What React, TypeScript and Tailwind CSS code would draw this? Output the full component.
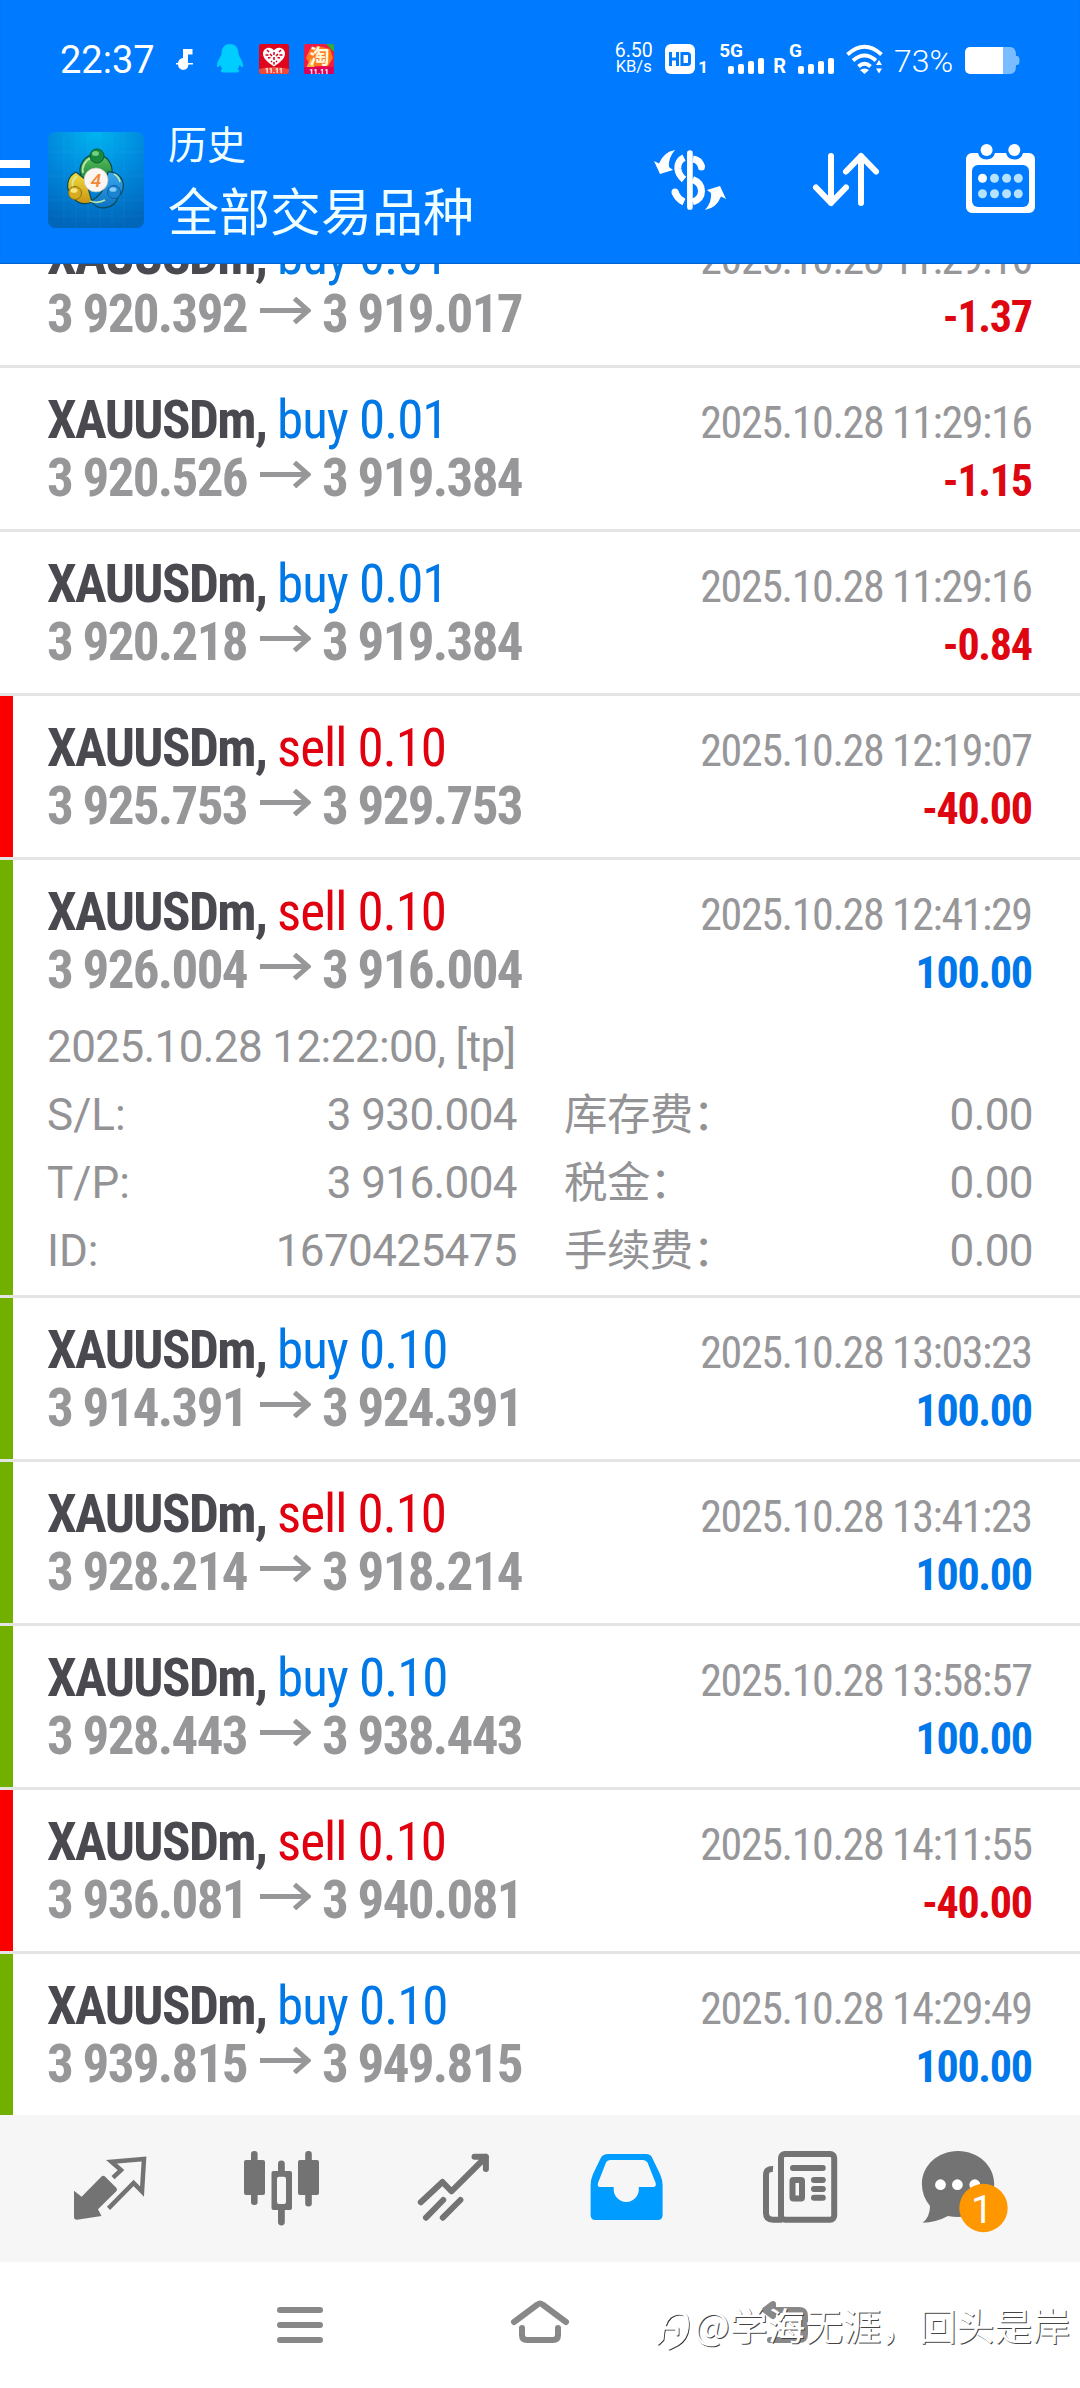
import type { ReactNode } from "react";

type Detail = { label: string; value: string; label2: string; value2: string };
type Trade = {
  side: "buy" | "sell";
  lots: string;
  from: string;
  to: string;
  time: string;
  profit: string;
  edge?: "red" | "green";
  opened?: string;
  details?: Detail[];
};

const trades: Trade[] = [
  { side: "buy", lots: "0.01", from: "3 920.392", to: "3 919.017", time: "2025.10.28 11:29:16", profit: "-1.37" },
  { side: "buy", lots: "0.01", from: "3 920.526", to: "3 919.384", time: "2025.10.28 11:29:16", profit: "-1.15" },
  { side: "buy", lots: "0.01", from: "3 920.218", to: "3 919.384", time: "2025.10.28 11:29:16", profit: "-0.84" },
  { side: "sell", lots: "0.10", from: "3 925.753", to: "3 929.753", time: "2025.10.28 12:19:07", profit: "-40.00", edge: "red" },
  {
    side: "sell", lots: "0.10", from: "3 926.004", to: "3 916.004", time: "2025.10.28 12:41:29", profit: "100.00", edge: "green",
    opened: "2025.10.28 12:22:00, [tp]",
    details: [
      { label: "S/L:", value: "3 930.004", label2: "库存费：", value2: "0.00" },
      { label: "T/P:", value: "3 916.004", label2: "税金：", value2: "0.00" },
      { label: "ID:", value: "1670425475", label2: "手续费：", value2: "0.00" },
    ],
  },
  { side: "buy", lots: "0.10", from: "3 914.391", to: "3 924.391", time: "2025.10.28 13:03:23", profit: "100.00", edge: "green" },
  { side: "sell", lots: "0.10", from: "3 928.214", to: "3 918.214", time: "2025.10.28 13:41:23", profit: "100.00", edge: "green" },
  { side: "buy", lots: "0.10", from: "3 928.443", to: "3 938.443", time: "2025.10.28 13:58:57", profit: "100.00", edge: "green" },
  { side: "sell", lots: "0.10", from: "3 936.081", to: "3 940.081", time: "2025.10.28 14:11:55", profit: "-40.00", edge: "red" },
  { side: "buy", lots: "0.10", from: "3 939.815", to: "3 949.815", time: "2025.10.28 14:29:49", profit: "100.00", edge: "green" },
];

function SignalBars() {
  return (
    <div className="flex items-end gap-[4px]">
      <i className="h-[8px] w-[6px] rounded-[2px] bg-white" />
      <i className="h-[10px] w-[6px] rounded-[2px] bg-white" />
      <i className="h-[13px] w-[6px] rounded-[2px] bg-white" />
      <i className="h-[16px] w-[6px] rounded-[2px] bg-white" />
    </div>
  );
}

function StatusBar() {
  return (
    <div className="flex h-[118px] items-start pl-[60px] pr-[60px] pt-[44px] text-white">
      <span className="-mt-[6px] w-[99px] text-[38px] leading-[44px]">22:37</span>
      <svg className="ml-[17px] mt-[5px]" width="18" height="21" viewBox="0 0 18 21" fill="#fff">
        <path d="M7 0h9.500v5.500H12v8.500h5v1.500h-4.500A6 6 0 0 1 7 21A6 6 0 0 1 2 15.500H0V14h2a6 6 0 0 1 5-5z" />
      </svg>
      <svg className="ml-[23px]" width="26" height="29" viewBox="0 0 26 29" fill="#00cdff">
        <path d="M13 0c6 0 8.500 4.500 8.500 9.500c0 3 4.500 7 4.500 12c0 3-1.500 1.500-3.500-.5c-.3 1.500-.8 2.500-1.800 3.800c3 2.700 1 3.700-2 3.700H7.300c-3 0-5-1-2-3.700c-1-1.300-1.500-2.300-1.800-3.800C1.500 23 0 24.500 0 21.500c0-5 4.500-9 4.500-12C4.500 4.500 7 0 13 0z" />
      </svg>
      <svg className="ml-[16px]" width="30" height="30" viewBox="0 0 30 30">
        <rect width="30" height="30" rx="2" fill="#e0041c" />
        <path d="M0 25Q15 21 30 25v3a2 2 0 0 1-2 2H2a2 2 0 0 1-2-2z" fill="#f0483a" />
        <path d="M15 22.500C8 18 4 14 4 9.500C4 3.500 12 1.500 15 6.500c3-5 11-3 11 3C26 14 22 18 15 22.500z" fill="#fff" />
        <path d="M15 8v3M15 13v3M15 18v2.500M8 6l2 2M22 6l-2 2M6.500 11h3M20.500 11h3M11 10l2 2M19 10l-2 2M9 14l2.500-.5M21 14l-2.500-.5M12 17l1 1M18 17l-1 1" stroke="#d00018" strokeWidth="1.500" />
        <text x="15" y="29" fontSize="7" fontWeight="700" textAnchor="middle" fill="#fff">11.11</text>
      </svg>
      <svg className="ml-[15px]" width="30" height="30" viewBox="0 0 30 30">
        <rect width="30" height="30" rx="2" fill="#ee1c44" />
        <path d="M2 14l4-9l8-3l12 3l3 9l-5 8H7z" fill="#ff7a1c" />
        <path d="M2 24l5-10l4 10z" fill="#ffb43a" />
        <path d="M22 0h6a2 2 0 0 1 2 2v6z" fill="#2fae3a" />
        <path d="M0 23h30v5a2 2 0 0 1-2 2H2a2 2 0 0 1-2-2z" fill="#dc0058" />
        <text x="15.500" y="19.500" fontSize="20" fontWeight="700" textAnchor="middle" fill="#fffbe0" className="font-['Noto_Sans_CJK_SC']">淘</text>
        <text x="15" y="29.500" fontSize="7.500" fontWeight="700" textAnchor="middle" fill="#fff">11.11</text>
      </svg>

      <div className="ml-auto flex h-[30px] items-end">
        <div className="flex w-[37px] flex-col items-center">
          <span className="text-[19.500px] leading-[15px]">6.50</span>
          <span className="mt-[1px] text-[16.500px] leading-[15px]">KB/s</span>
        </div>
        <svg className="ml-[13px]" width="30" height="30" viewBox="0 0 30 30">
          <rect width="30" height="30" rx="6" fill="#fff" />
          <path d="M5.500 8v14M12.500 8v14M5.500 15h7M17 9.500h5.500q2 0 2 2v7q0 2-2 2H17z" fill="none" stroke="#007aff" strokeWidth="3" />
        </svg>
        <span className="ml-[3px] w-[9px] text-[17px] font-bold leading-[13px]">1</span>
        <div className="ml-[12px] flex h-[30px] flex-col justify-between">
          <span className="h-[14px] text-[19px] font-bold leading-[14px]">5G</span>
          <div className="ml-[9px]"><SignalBars /></div>
        </div>
        <span className="ml-[9px] text-[20px] font-bold leading-[15px]">R</span>
        <div className="ml-[3px] flex h-[30px] flex-col justify-between">
          <span className="h-[14px] text-[19px] font-bold leading-[14px]">G</span>
          <div className="ml-[9px]"><SignalBars /></div>
        </div>
        <svg className="ml-[12px]" width="38" height="30" viewBox="0 0 38 30" fill="none" stroke="#fff" strokeWidth="4">
          <path d="M1.500 10.500Q18.500-5 35.500 10.500M7 16.500Q18.500 6.500 30 16.500M12.500 22.500Q18.500 17 24.500 22.500" />
          <path d="M14 26q4.500-3 9 0l-4.500 4zM33 16l3 5h-6zM33 29.500l3-5h-6z" fill="#fff" stroke="none" />
        </svg>
        <span className="ml-[10px] w-[63px] text-[32px] font-[350] leading-[26px]">73%</span>
        <svg className="ml-[8px]" width="55" height="27" viewBox="0 0 55 27">
          <path d="M38 0h7q6 0 6 8v1h1q2.500 0 2.500 4.500T52 18h-1v1q0 8-6 8h-7z" fill="#79bcff" />
          <rect width="38" height="27" rx="5" fill="#fff" />
          <rect x="20" width="18" height="27" fill="#fff" />
        </svg>
      </div>
    </div>
  );
}

function AppLogo() {
  return (
    <svg width="96" height="96" viewBox="0 0 96 96">
      <defs>
        <radialGradient id="logoBg" cx="0.5" cy="0" r="1">
          <stop offset="0" stopColor="#00b4ee" />
          <stop offset="0.5" stopColor="#008ade" />
          <stop offset="1" stopColor="#0066ba" />
        </radialGradient>
        <linearGradient id="green" x1="0" y1="0" x2="0" y2="1">
          <stop offset="0" stopColor="#5cc05c" /><stop offset="1" stopColor="#0e7a34" />
        </linearGradient>
        <linearGradient id="gold" x1="0" y1="0" x2="0" y2="1">
          <stop offset="0" stopColor="#f4dc3c" /><stop offset="1" stopColor="#c89414" />
        </linearGradient>
        <linearGradient id="sky" x1="0" y1="0" x2="0" y2="1">
          <stop offset="0" stopColor="#3aa8ee" /><stop offset="1" stopColor="#0c72c0" />
        </linearGradient>
      </defs>
      <rect width="96" height="96" rx="7" fill="url(#logoBg)" />
      <path d="M16 0v96M28 0v96M40 0v96M52 0v96M64 0v96M76 0v96M0 20h96M0 44h96M0 68h96M0 84h96" stroke="#fff" strokeOpacity="0.04" />
      <g stroke="#0a4a50" strokeWidth="1.200">
        <path d="M33 44a16 16 0 1 1 30 0l-6 10l-10-8l-9 4z" fill="url(#green)" />
        <path d="M28 40a15 15 0 0 0-4 24a15 15 0 0 0 20 6l-6-22z" fill="url(#gold)" />
        <path d="M60 40a14 14 0 0 1 10 25a15 15 0 0 1-27 4q12-6 15-20z" fill="url(#sky)" />
      </g>
      <path d="M35 41a13 13 0 0 1 8-15M25 56a11 11 0 0 1 4-12M72 50a11 11 0 0 0-6-8M42 69q8 3 15-1" fill="none" stroke="#cdf5b0" strokeOpacity="0.85" strokeWidth="1.800" />
      <circle cx="49" cy="24" r="7" fill="#178a3e" stroke="#0b5a2c" />
      <ellipse cx="47.500" cy="21.500" rx="3.500" ry="2.500" fill="#6fd080" />
      <circle cx="27" cy="61" r="6.500" fill="#d6ac1e" stroke="#8c7010" />
      <ellipse cx="26" cy="58.500" rx="3.500" ry="2.300" fill="#f7e680" />
      <circle cx="66" cy="60" r="6.500" fill="#1a84d2" stroke="#0c5ea0" />
      <ellipse cx="65" cy="57.500" rx="3.500" ry="2.300" fill="#86ccf8" />
      <circle cx="48" cy="48" r="12" fill="#fbf6f2" stroke="#b8c8c0" strokeWidth="0.800" />
      <text x="48" y="54.500" fontSize="19" fontWeight="500" fontStyle="italic" textAnchor="middle" fill="#f0893a">4</text>
    </svg>
  );
}

function Header() {
  return (
    <header className="relative z-10 h-[264px] bg-[#007aff] shadow-[inset_0_-1px_1px_#0063cf]">
      <StatusBar />
      <div className="flex h-[146px] items-start pr-[45px]">
        <div className="mt-[42px] flex w-[30px] flex-col gap-[10px]">
          <i className="h-[8px] bg-white" />
          <i className="h-[8px] bg-white" />
          <i className="h-[8px] bg-white" />
        </div>
        <div className="ml-[18px] mt-[14px]"><AppLogo /></div>
        <div className="ml-[24px] flex flex-col font-['Noto_Sans_CJK_SC',sans-serif] font-normal text-[#f0ffff]">
          <span className="mt-[-4px] text-[39px] leading-[56px]">历史</span>
          <span className="mt-[2px] text-[51px] leading-[74px]">全部交易品种</span>
        </div>
        <svg className="ml-auto mt-[22px]" width="100" height="80" viewBox="0 0 100 80" fill="none" stroke="#fff" strokeWidth="7">
          <path d="M49.900 13V67" strokeWidth="5.700" strokeLinecap="round" />
          <path d="M44 17.700Q37.500 21 37.800 28.500Q38.500 35 44 39.500" />
          <path d="M53 19Q60 20 61.500 27" />
          <path d="M61.400 26.500v.5M35 52v.3" strokeLinecap="round" />
          <path d="M52.700 39.500Q61.500 43 61.500 51T52.700 62" />
          <path d="M35 52Q37.500 59 44 62" />
          <path d="M35 10Q23.500 12 19 23.500L14 21L20 34L33 30L29 27Q28 18 35 10zM65 70Q76.500 68 81 56.500L86 59L80 46L67 50L71 53Q72 62 65 70z" fill="#fff" stroke="none" />
        </svg>
        <svg className="ml-[69px] mt-[31px]" width="74" height="60" viewBox="0 0 74 60" fill="none" stroke="#fff" strokeWidth="6" strokeLinecap="round" strokeLinejoin="round">
          <path d="M22 7V54M7 38.500L22 54L37 38.500M52 54V7M37 22.500L52 7L67 22.500" />
        </svg>
        <svg className="ml-[83px] mt-[25px]" width="69" height="70" viewBox="0 0 69 70">
          <path d="M6 10H12A8.800 8.800 0 0 0 29 10H40A8.800 8.800 0 0 0 57 10H63A6 6 0 0 1 69 16V64A6 6 0 0 1 63 70H6A6 6 0 0 1 0 64V16A6 6 0 0 1 6 10Z" fill="#fff" />
          <rect x="6" y="22" width="57" height="42" rx="6" fill="#007aff" />
          <circle cx="20.600" cy="7" r="6" fill="#fff" />
          <circle cx="48.300" cy="7" r="6" fill="#fff" />
          {[35.3, 50.7].map((y) =>
            [16.5, 28.5, 40.6, 52.3].map((x) => (
              <circle key={`${x}-${y}`} cx={x} cy={y} r="4.500" fill={x < 20 && y < 40 ? "#fff" : "#b5e2ff"} />
            )),
          )}
        </svg>
      </div>
    </header>
  );
}

function TradeRow({ t }: { t: Trade }) {
  const sideColor = t.side === "buy" ? "text-[#0078e6]" : "text-[#e0000f]";
  const profitColor = t.profit.startsWith("-") ? "text-[#de0611]" : "text-[#0078ea]";
  const edge = t.edge === "red" ? "bg-[#fc0000]" : t.edge === "green" ? "bg-[#72b000]" : "bg-transparent";
  return (
    <li className="flex border-b-[3px] border-[#e4e4e4] last:border-b-0">
      <div className={`w-[13px] shrink-0 ${edge}`} />
      <div className={`flex min-w-0 grow flex-col pl-[34px] pr-[47px] pt-[23px] ${t.details ? "h-[435px]" : "h-[161px]"}`}>
        <div className="flex h-[58px] items-baseline justify-between whitespace-pre font-['Roboto_Condensed','Roboto',sans-serif] text-[53px] leading-[58px]">
          <div>
            <span className="font-bold tracking-[-1.6px] text-[#4a494f]">XAUUSDm, </span>
            <span className={`tracking-[-1px] ${sideColor}`}>{t.side} {t.lots}</span>
          </div>
          <span className="mr-[1.4px] text-[44px] tracking-[-1.4px] text-[#97979a]">{t.time}</span>
        </div>
        <div className="flex h-[58px] items-baseline justify-between whitespace-pre font-['Roboto_Condensed','Roboto',sans-serif] text-[53px] font-bold leading-[58px]">
          <div className="flex items-baseline tracking-[-1.7px] text-[#97979a]">
            <span className="w-[213px]">{t.from}</span>
            <svg className="mt-[12px] self-start" width="51" height="27" viewBox="0 0 51 27" fill="none" stroke="#97979a" strokeWidth="5">
              <path d="M0 13.500H48M34.500 1.500L48 13.500L34.500 25.500" />
            </svg>
            <span className="ml-[11px]">{t.to}</span>
          </div>
          <span className={`mr-[1.3px] text-[44px] tracking-[-1.3px] ${profitColor}`}>{t.profit}</span>
        </div>
        {t.details && (
          <div className="mt-[14px] text-[44px] font-[370] leading-[68px] tracking-[-0.6px] text-[#939396]">
            <div className="h-[68px]">{t.opened}</div>
            {t.details.map((d) => (
              <div key={d.label} className="flex h-[68px] items-baseline">
                <div className="flex w-[470px] justify-between">
                  <span className="tracking-normal">{d.label}</span>
                  <span>{d.value}</span>
                </div>
                <span className="ml-[47px] font-['Noto_Sans_CJK_SC',sans-serif] text-[43.500px] font-normal leading-[60px]">{d.label2}</span>
                <span className="ml-auto">{d.value2}</span>
              </div>
            ))}
          </div>
        )}
      </div>
    </li>
  );
}

function Tab({ children }: { children: ReactNode }) {
  return (
    <button className="flex w-[172px] justify-center pt-[24px]">
      <svg width="100" height="100" viewBox="0 0 100 100">{children}</svg>
    </button>
  );
}

function TabBar() {
  return (
    <nav className="flex h-[147px] bg-[#f6f6f6] px-[24px]">
      <Tab>
        <path d="M14 51.700L21.600 57.700L41.500 37.500Q43.300 36 45 37.500L56.500 49Q57.500 50.500 56.500 52L38 70.300L41.500 77L17 80.700Q14 80.700 14 78Z" fill="#737373" />
        <path d="M53 38.700L61 31L51.500 22.700L84 20L82 52.500L73.600 44L48.500 69.300" fill="none" stroke="#737373" strokeWidth="4.500" />
      </Tab>
      <Tab>
        <g fill="#737373">
          <rect x="12" y="21" width="21" height="35" rx="2" />
          <rect x="19" y="12" width="6.600" height="54" rx="3" />
          <path fillRule="evenodd" d="M41.500 32h16.500a2 2 0 0 1 2 2V69a2 2 0 0 1-2 2H41.500a2 2 0 0 1-2-2V34a2 2 0 0 1 2-2zM47 37.700a2 2 0 0 0-2 2V63a2 2 0 0 0 2 2h5a2 2 0 0 0 2-2V39.700a2 2 0 0 0-2-2z" />
          <path d="M46 33V25a3.400 3.400 0 0 1 6.800 0v8zM46 70V83a3.400 3.400 0 0 0 6.800 0V70z" />
          <rect x="66" y="21" width="21" height="35" rx="2" />
          <rect x="73.200" y="12" width="6.600" height="55.500" rx="3" />
        </g>
      </Tab>
      <Tab>
        <path d="M16.800 63.300L38.500 43L47.400 52.300L81.900 18M70.500 17.700H81.900V30M22 78.700L39.200 61M38.800 78.700L56.400 61" fill="none" stroke="#737373" strokeWidth="6" strokeLinecap="round" strokeLinejoin="round" />
      </Tab>
      <Tab>
        <path d="M32 15H70Q74.500 15 76 18.500L84 35Q86.600 41 86.600 46V76Q86.600 81 81.600 81H19.600Q14.600 81 14.600 76V46Q14.600 41 17 35L25 18.500Q27 15 32 15Z" fill="#009cff" />
        <path d="M34 21H67Q70 21 71.500 23.500L79.700 44Q80.500 48 77 48H62.800V50.500A12.500 12.500 0 0 1 37.700 50.500V48H24Q21 48 22 44L30 23.500Q31 21 34 21Z" fill="#f6f6f6" />
      </Tab>
      <Tab>
        <g fill="none" stroke="#737373" strokeWidth="6">
          <rect x="33" y="15" width="53.200" height="65.700" rx="4" />
          <path d="M25 30Q18 29.500 18 36V74Q18 80.700 25 80.700H34" />
          <rect x="44.500" y="41" width="9.500" height="18.500" rx="1" />
          <path d="M45 29H74.800M66 41H74.800M66 49.900H74.800M66 58.800H74.800" strokeLinecap="round" />
        </g>
      </Tab>
      <Tab>
        <path d="M38 12C58.500 12 74.200 27 74.200 45S58 78 38 78Q33 78 28 77Q16 83.500 2.600 83.700Q10 78 10 67Q1.900 57 1.900 45C1.900 27 17.500 12 38 12Z" fill="#737373" />
        <circle cx="20.500" cy="45.700" r="5.400" fill="#fff" />
        <circle cx="37.400" cy="45.700" r="5.400" fill="#fff" />
        <circle cx="54.800" cy="45.700" r="5.400" fill="#fff" />
        <circle cx="63.500" cy="69" r="24.200" fill="#ff9800" />
        <text x="62" y="83.500" fontSize="39" textAnchor="middle" fill="#fff">1</text>
      </Tab>
    </nav>
  );
}

function SystemNav() {
  return (
    <div className="relative flex h-[126px] items-start pl-[277px] pt-[38px]">
      <svg width="46" height="50" viewBox="0 0 46 50" stroke="#888" strokeWidth="6" strokeLinecap="round">
        <path d="M3 10H43M3 25H43M3 40H43" />
      </svg>
      <svg className="ml-[187px]" width="60" height="50" viewBox="0 0 60 50" fill="none" stroke="#888" strokeWidth="6" strokeLinecap="round" strokeLinejoin="round">
        <path d="M4 22L27.500 4.500Q30 2.500 32.500 4.500L56 22M12 28V35Q12 40 17 40H43Q48 40 48 35V28" />
      </svg>
      <svg className="ml-[192px]" width="48" height="50" viewBox="0 0 48 50" fill="none" stroke="#888" strokeWidth="6" strokeLinecap="round" strokeLinejoin="round">
        <path d="M10 10H37Q43 10 43 16V34Q43 40 37 40H8" />
        <path d="M11 4L3 10L11 16Z" fill="#888" />
      </svg>
      <div className="absolute left-[655px] top-[38px] flex items-start">
        <svg className="mt-[10px]" width="36" height="44" viewBox="0 0 36 44" fill="none" strokeLinecap="round" strokeLinejoin="round">
          <g stroke="#333" strokeWidth="3" transform="translate(1 1)">
            <path d="M3 33L7 29Q8 12 15 6Q22 1 29 4Q33 7 32 18Q31 28 22 34L14 38M8 18H22V24" />
          </g>
          <path stroke="#fff" strokeWidth="3.500" d="M3 33L7 29Q8 12 15 6Q22 1 29 4Q33 7 32 18Q31 28 22 34L14 38M8 18H22V24" />
        </svg>
        <span className="ml-[3px] whitespace-nowrap font-['Noto_Sans_CJK_SC',sans-serif] text-[37.800px] leading-[48px] text-white [text-shadow:1px_1px_0_#444]">@学海无涯，回头是岸</span>
      </div>
    </div>
  );
}

export default function App() {
  return (
    <div className="flex h-[2388px] w-[1080px] flex-col overflow-hidden bg-white font-['Roboto',sans-serif]">
      <Header />
      <main className="h-[1851px] overflow-hidden">
        <ul className="-mt-[60px]">
          {trades.map((t, i) => (
            <TradeRow key={i} t={t} />
          ))}
        </ul>
      </main>
      <TabBar />
      <SystemNav />
    </div>
  );
}
